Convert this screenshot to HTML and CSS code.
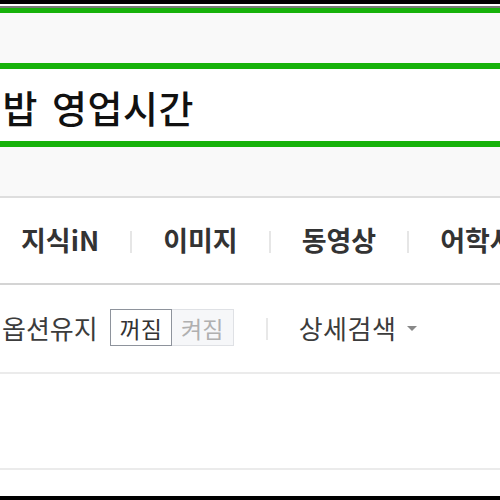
FILE: index.html
```html
<!DOCTYPE html>
<html lang="ko">
<head>
    <meta charset="UTF-8">
    <meta name="viewport" content="width=device-width, initial-scale=1.0">
    <title>검색</title>
    <link rel="stylesheet" href="styles.css">
</head>
<body>
    <div class="page">
        <div class="frame-top"></div>
        <div class="prev-box"></div>
        <!-- 검색창 -->
        <div class="search">
            <span class="query">김밥 영업시간</span>
        </div>
        <div class="gap"></div>
        <div class="tabs">
            <a href="javascript:;" class="tab">지식iN</a>
            <span class="bar"></span>
            <a href="javascript:;" class="tab">이미지</a>
            <span class="bar"></span>
            <a href="javascript:;" class="tab">동영상</a>
            <span class="bar"></span>
            <a href="javascript:;" class="tab">어학사전</a>
        </div>
        <div class="options">
            <span class="opt-label">옵션유지</span>
            <div class="toggle">
                <a href="javascript:;" class="on">꺼짐</a>
                <a href="javascript:;">켜짐</a>
            </div>
            <span class="bar thin"></span>
            <a href="javascript:;" class="detail">상세검색 <i class="arrow"></i></a>
        </div>
        <div class="empty"></div>
        <div class="bottom"></div>
        <div class="frame-bottom"></div>
    </div>
</body>
</html>
```

FILE: styles.css
```css
* {
    margin: 0;
    padding: 0;
    box-sizing: border-box;
}
body {
    width: 500px;
    height: 500px;
    overflow: hidden;
    background: #fff;
    font-family: "Noto Sans CJK KR", "Noto Sans", sans-serif;
}
a {
    text-decoration: none;
    color: inherit;
}
.page {
    display: flex;
    flex-direction: column;
    height: 500px;
    overflow: hidden;
}
/* 위쪽 검은 테두리 */
.frame-top {
    height: 8px;
    flex: none;
    background: linear-gradient(#000 0 4px, #fff 4px 6px, #777 6px 8px);
}
.prev-box {
    height: 55px;
    flex: none;
    background: #f9f9f9;
    border-top: 5px solid #17b20a;
}
.search {
    height: 84px;
    flex: none;
    display: flex;
    align-items: center;
    border-top: 6px solid #17b20a;
    border-bottom: 6px solid #17b20a;
    background: #fff;
    overflow: hidden;
}
.query {
    margin-left: -33px;
    padding-top: 2px;
    font-size: 38px;
    font-weight: 500;
    letter-spacing: 0.5px;
    word-spacing: 3px;
    color: #111;
    white-space: nowrap;
}
.gap {
    height: 51px;
    flex: none;
    background: #f9f9f9;
    border-bottom: 2px solid #dedede;
}
.tabs {
    height: 87px;
    flex: none;
    display: flex;
    align-items: center;
    gap: 31px;
    padding-left: 21px;
    padding-bottom: 2px;
    border-bottom: 2px solid #d4d4d4;
    white-space: nowrap;
    overflow: hidden;
}
.tab {
    font-size: 27px;
    font-weight: 700;
    color: #333;
}
.bar {
    width: 2px;
    height: 22px;
    background: #e6e6e6;
    flex: none;
    margin-top: 4px;
}
.options {
    height: 89px;
    flex: none;
    display: flex;
    align-items: center;
    padding-left: 2px;
    padding-bottom: 2px;
    border-bottom: 2px solid #ebebeb;
    white-space: nowrap;
}
.opt-label {
    font-size: 26px;
    color: #3c3c3c;
    margin-right: 12px;
}
.toggle {
    display: flex;
    height: 37px;
}
.toggle a {
    width: 62px;
    display: flex;
    align-items: center;
    justify-content: center;
    font-size: 23px;
    color: #b0b0b0;
    background: #f6f7f9;
    border: 1px solid #dfe1e5;
    border-left: 0;
}
.toggle .on {
    color: #333;
    background: #fff;
    border: 1px solid #8e939c;
}
.bar.thin {
    margin: 2px 31px 0 32px;
    background: #e8e8e8;
}
.detail {
    font-size: 26px;
    letter-spacing: 0.5px;
    color: #3c3c3c;
    display: flex;
    align-items: center;
}
.arrow {
    display: inline-block;
    margin-left: 11px;
    margin-top: 2px;
    border-left: 5px solid transparent;
    border-right: 5px solid transparent;
    border-top: 5px solid #888;
}
.empty {
    height: 96px;
    flex: none;
    border-bottom: 2px solid #ebebeb;
}
.bottom {
    flex: 1;
}
.frame-bottom {
    height: 4px;
    flex: none;
    background: #000;
}
```
